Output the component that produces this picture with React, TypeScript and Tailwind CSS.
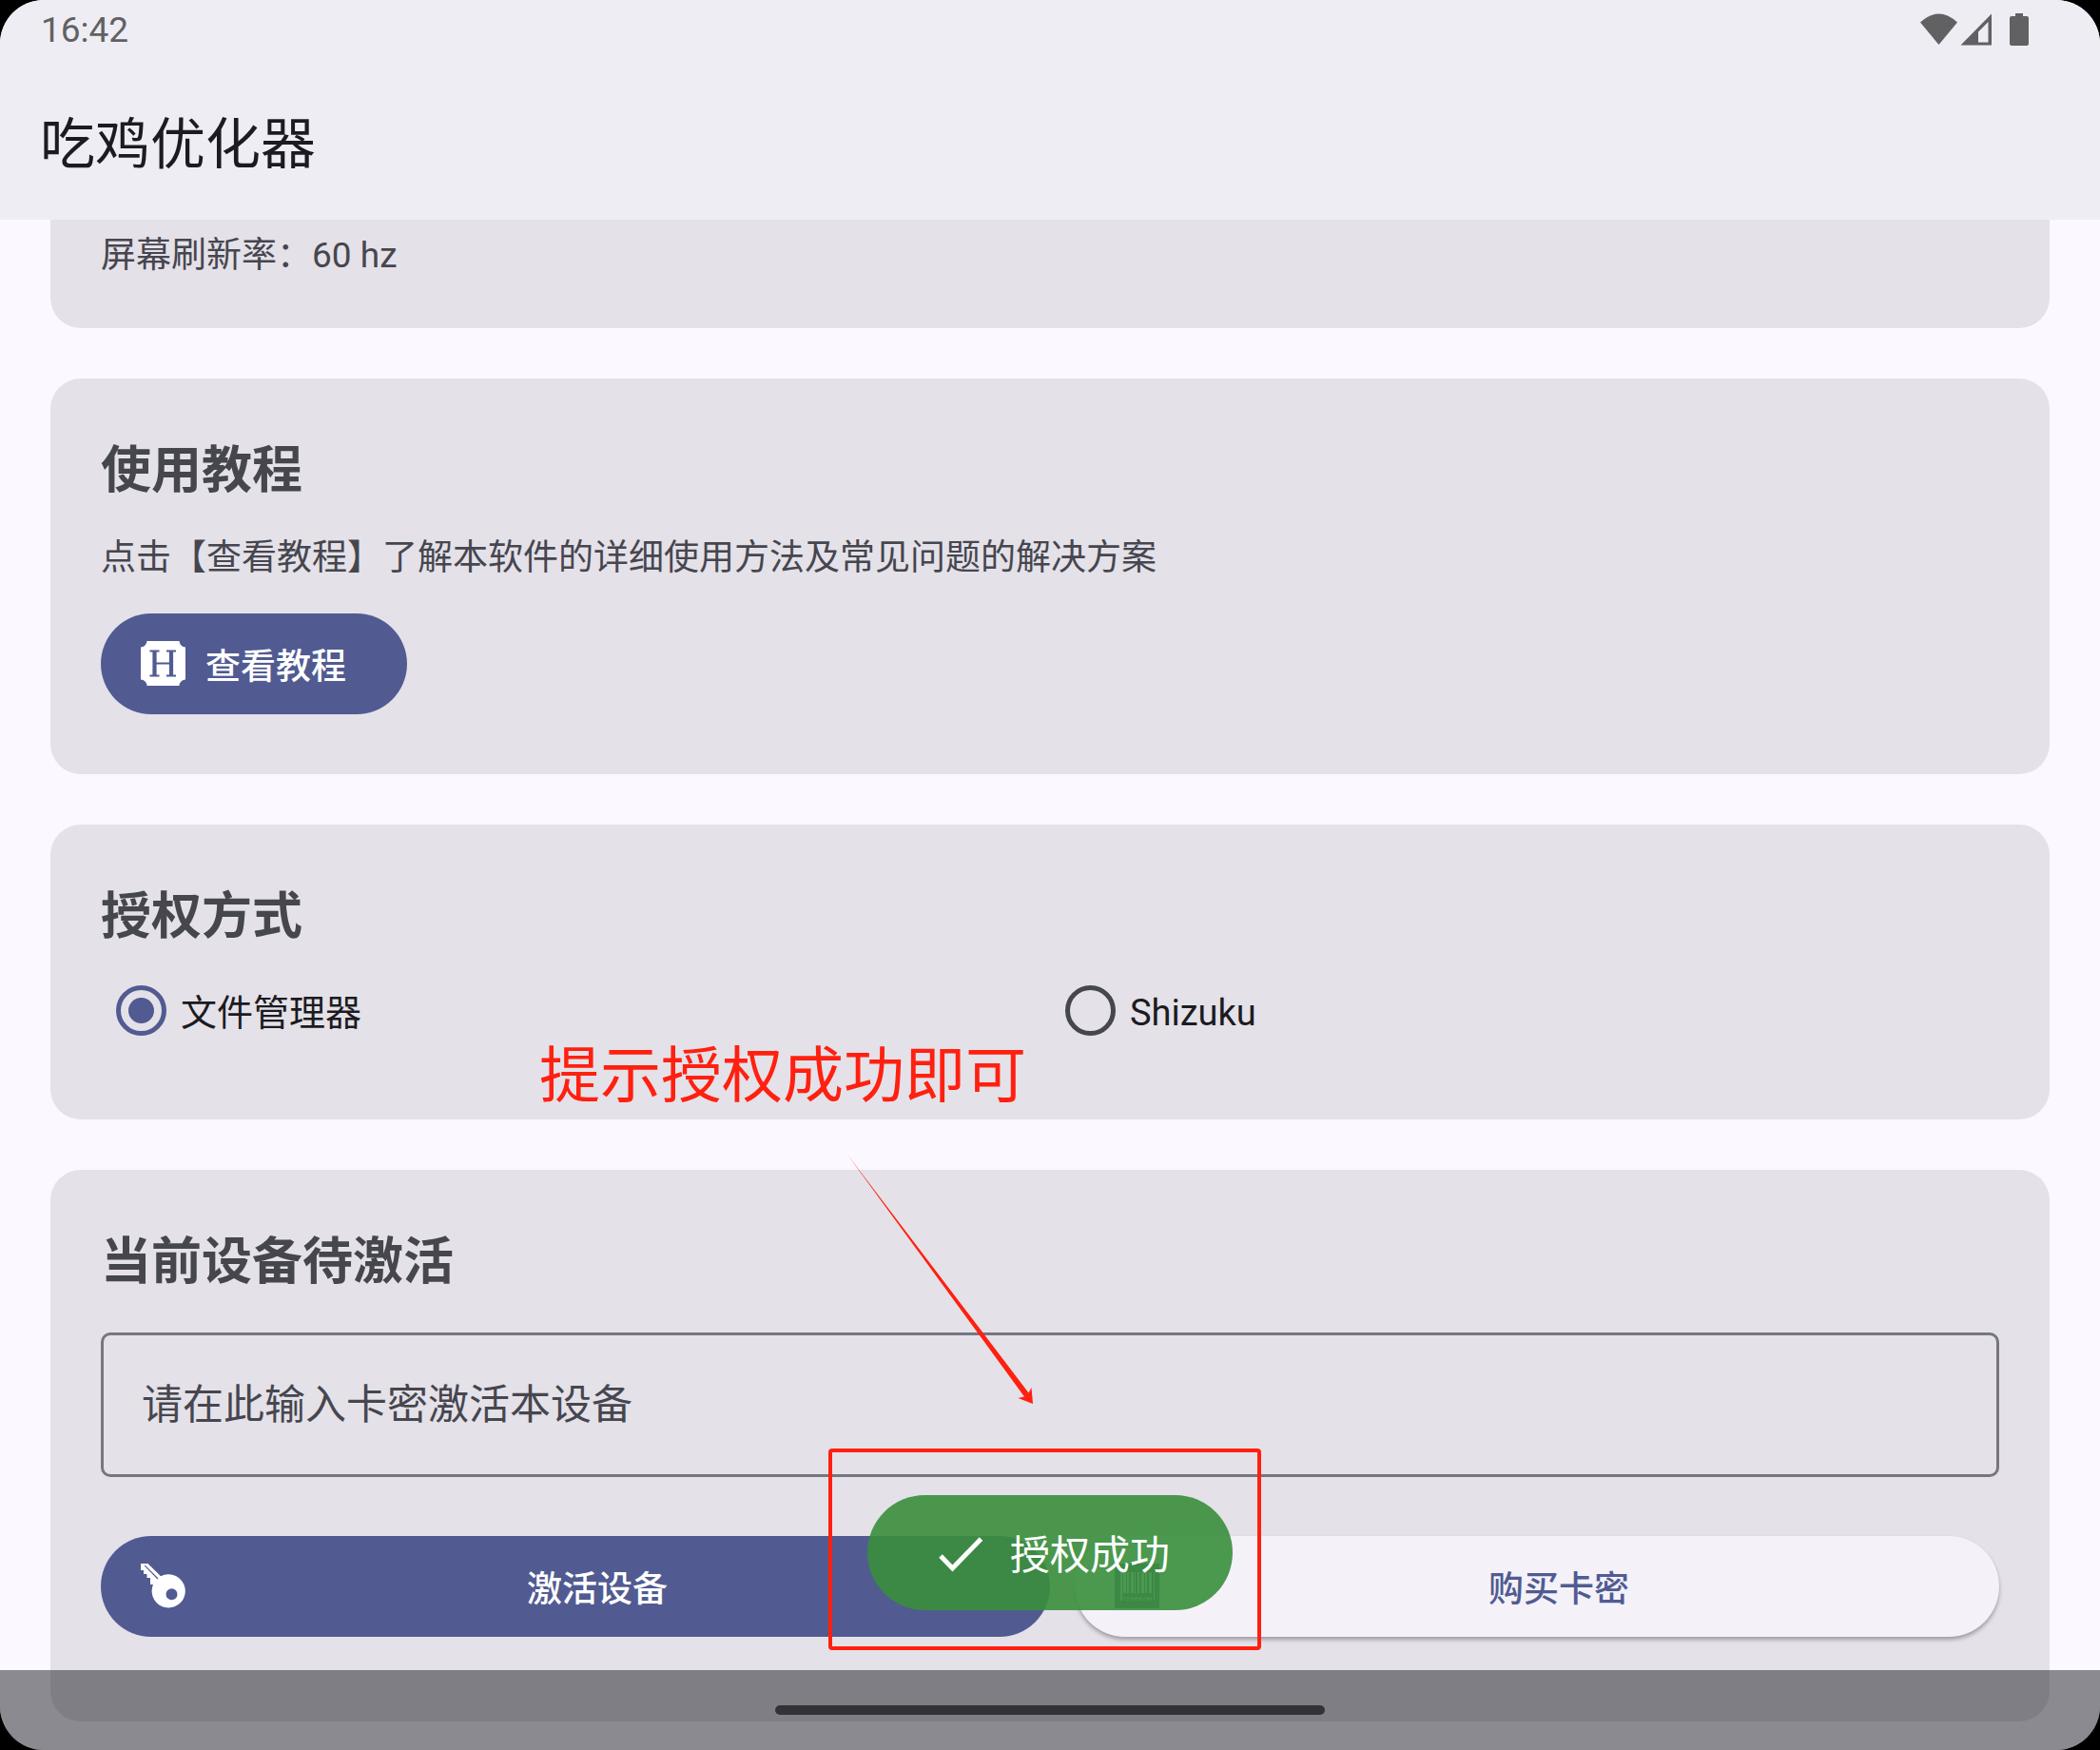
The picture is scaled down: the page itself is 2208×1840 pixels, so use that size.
import React, { useState } from 'react';

interface CardProps {
  title: string;
  className?: string;
  children: React.ReactNode;
}

const Card: React.FC<CardProps> = ({ title, className = '', children }) => (
  <section className={`rounded-[32px] bg-[#e4e1e8] px-[53px] pt-[57px] ${className}`}>
    <h2 className="text-[53px] leading-[80px] font-bold">{title}</h2>
    {children}
  </section>
);

const TutorialIcon = () => (
  <svg viewBox="0 0 48 48" className="size-12 shrink-0" aria-hidden="true">
    <path
      fill="currentColor"
      d="M7.500 0h34a6.500 6.500 0 0 0 6.500 6.500v34a6.500 6.500 0 0 0-6.500 6.500h-34a6.500 6.500 0 0 0-6.500-6.500v-34a6.500 6.500 0 0 0 6.500-6.500z"
    />
    <path fill="none" stroke="#515b92" strokeWidth="4.200" d="M15.500 10v27M33 10v27" />
    <path
      fill="none"
      stroke="#515b92"
      strokeWidth="1.800"
      d="M10.500 10.500h10M28 10.500h10M10.500 36.500h10M28 36.500h10M16 23.500h17"
    />
  </svg>
);

const KeyIcon = () => (
  <svg viewBox="0 1 48 48" className="size-12 shrink-0" aria-hidden="true">
    <path
      fill="currentColor"
      fillRule="evenodd"
      d="M1 1h7.500L22 14.300A17.600 17.600 0 1 1 14 23H11v-7H7.500v-4H4V8H1zM4.500 3L18.500 17.500l1-1L6 3zM33.500 27.200a6 6 0 1 0 0 12a6 6 0 0 0 0-12z"
    />
  </svg>
);

const BarcodeIcon = () => (
  <svg viewBox="0 1 48 48" className="size-12 shrink-0 text-[#515b92]" aria-hidden="true">
    <path fill="currentColor" d="M1 1h47v47H1z" />
    <path
      fill="#f4f1f9"
      d="M7 10h2v30H7zM10 10h3v22h-3zM14 10h2v22h-2zM18 10h3v22h-3zM22 10h1v22h-1zM25 10h2v22h-2zM29 10h3v22h-3zM33 10h2v22h-2zM37 10h3v22h-3zM42 10h1v30h-1z"
    />
    <text x="25" y="40" fontSize="6" textAnchor="middle" fill="#f4f1f9">
      123456789
    </text>
  </svg>
);

const StatusBar = () => (
  <div className="flex h-16 items-center justify-between pr-[74px] pl-[43px] text-[#616163]">
    <time className="text-[37px]">16:42</time>
    <svg viewBox="0 1 116 36" className="h-9 w-[116px]" fill="currentColor" aria-hidden="true">
      <path d="M1 10.500Q20.500-7.500 40 10.500L20.500 34z" />
      <path fillRule="evenodd" d="M43.500 34.500L76 1.500v33zM72.500 10L62 20.500v11h10.500z" />
      <path d="M101 1h8v3h4a2 2 0 0 1 2 2v27a2 2 0 0 1-2 2H97a2 2 0 0 1-2-2V6a2 2 0 0 1 2-2h4z" />
    </svg>
  </div>
);

const authModes = [
  { id: 'files', label: '文件管理器' },
  { id: 'shizuku', label: 'Shizuku' },
];

const App: React.FC = () => {
  const [mode, setMode] = useState('files');
  const [cardKey, setCardKey] = useState('');

  return (
    <div className="h-screen bg-black font-['Roboto','Noto_Sans_CJK_SC',sans-serif] text-[37px] leading-[56px] text-[#46464f]">
      <div className="relative flex h-full flex-col overflow-hidden rounded-[46px] bg-[#fbf8ff]">
        <header className="shrink-0 bg-[#efedf4]">
          <StatusBar />
          <h1 className="px-[42px] pt-[46px] pb-[37px] text-[58px] leading-[84px] text-[#1b1b21]">吃鸡优化器</h1>
        </header>

        <main className="flex flex-1 flex-col gap-[53px] overflow-hidden px-[53px]">
          <section className="shrink-0 rounded-b-[32px] bg-[#e4e1e8] px-[53px] pt-[10px] pb-12">
            <p>屏幕刷新率：60 hz</p>
          </section>

          <Card title="使用教程" className="shrink-0 pb-[63px]">
            <p className="mt-6">点击【查看教程】了解本软件的详细使用方法及常见问题的解决方案</p>
            <button
              type="button"
              className="mt-[30px] flex h-[106px] items-center rounded-full bg-[#515b92] pr-16 pl-[41px] font-medium text-white"
            >
              <TutorialIcon />
              <span className="ml-[21px] pt-2">查看教程</span>
            </button>
          </Card>

          <Card title="授权方式" className="shrink-0 pb-[63px]">
            <div className="grid grid-cols-2">
              {authModes.map(({ id, label }) => (
                <label key={id} className="flex h-[110px] items-center gap-[15px] pt-1.5 pl-4 text-[38px] text-[#1b1b21]">
                  <input
                    type="radio"
                    name="auth-mode"
                    value={id}
                    checked={mode === id}
                    onChange={() => setMode(id)}
                    className="size-[53px] appearance-none rounded-full border-[5px] border-[#46464f] bg-clip-content p-2 checked:border-[#515b92] checked:bg-[#515b92]"
                  />
                  <span className="pt-1.5">{label}</span>
                </label>
              ))}
            </div>
          </Card>

          <Card title="当前设备待激活" className="shrink-0 pb-[89px]">
            <input
              type="text"
              aria-label="卡密"
              value={cardKey}
              onChange={(e) => setCardKey(e.target.value)}
              placeholder="请在此输入卡密激活本设备"
              className="mt-[34px] block h-[152px] w-full rounded-[10px] border-[3px] border-[#767680] bg-transparent px-10 text-[43px] placeholder:text-[#46464f]"
            />
            <div className="mt-[62px] grid grid-cols-2">
              <button
                type="button"
                className="flex h-[106px] items-center rounded-full bg-[#515b92] pr-16 pl-[41px] font-medium text-white"
              >
                <KeyIcon />
                <span className="ml-[21px] flex-1 pt-2">激活设备</span>
              </button>
              <button
                type="button"
                className="ml-[26px] flex h-[106px] items-center rounded-full bg-[#f4f1f9] pr-16 pl-[41px] font-medium text-[#515b92] shadow-[0_3px_4px_rgba(0,0,0,0.3)]"
              >
                <BarcodeIcon />
                <span className="ml-[21px] flex-1 pt-2">购买卡密</span>
              </button>
            </div>
          </Card>
        </main>

        <div
          role="status"
          className="absolute bottom-[147px] left-1/2 flex h-[121px] -translate-x-1/2 items-center gap-5 rounded-full bg-[#388e3c]/90 px-[66px] text-[42px] text-white"
        >
          <svg viewBox="0 0 64 64" className="size-16" aria-hidden="true">
            <path fill="none" stroke="currentColor" strokeWidth="5" d="M11 35L23.500 48L53.500 17" />
          </svg>
          <span className="pt-1.5">授权成功</span>
        </div>

        <nav className="absolute inset-x-0 bottom-0 flex h-[84px] justify-center bg-[#1a1c21]/50 pt-[37px]">
          <button type="button" aria-label="主屏幕" className="h-[10px] w-[578px] rounded-full bg-[#333237]" />
        </nav>

        {/* tutorial notes drawn over the app */}
        <p className="absolute top-[1087px] left-[567px] text-[64px] leading-[90px] text-[#ff2010]">
          提示授权成功即可
        </p>
        <svg
          viewBox="0 0 200 268"
          className="absolute top-[1212px] left-[889px] h-[268px] w-[200px]"
          fill="#ff2010"
          aria-hidden="true"
        >
          <path d="M2 2L188 256.500L181.500 258L197 264L195.500 247L192.500 252.500z" />
        </svg>
        <div className="absolute top-[1523px] left-[871px] h-[212px] w-[455px] rounded-sm border-4 border-[#ff2010]" />
      </div>
    </div>
  );
};

export default App;
